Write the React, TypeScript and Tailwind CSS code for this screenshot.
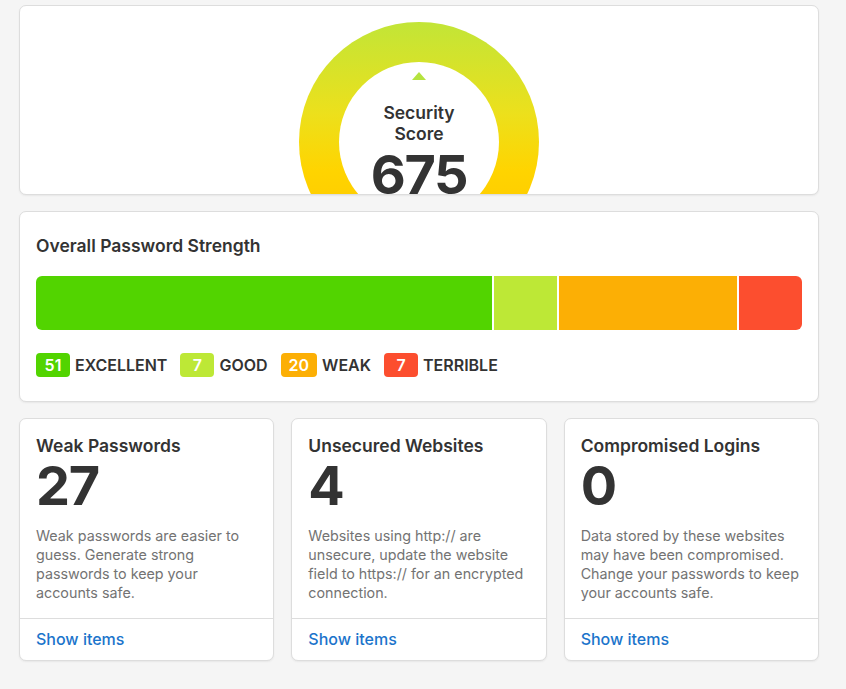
const segments = [
  { count: 51, label: 'EXCELLENT', color: 'bg-[#52d400]' },
  { count: 7, label: 'GOOD', color: 'bg-[#bde836]' },
  { count: 20, label: 'WEAK', color: 'bg-[#fcaf05]' },
  { count: 7, label: 'TERRIBLE', color: 'bg-[#fc4e2f]' },
];

const stats = [
  {
    title: 'Weak Passwords',
    value: 27,
    text: 'Weak passwords are easier to guess. Generate strong passwords to keep your accounts safe.',
  },
  {
    title: 'Unsecured Websites',
    value: 4,
    text: 'Websites using http:// are unsecure, update the website field to https:// for an encrypted connection.',
  },
  {
    title: 'Compromised Logins',
    value: 0,
    text: 'Data stored by these websites may have been compromised. Change your passwords to keep your accounts safe.',
  },
];

const card = 'bg-white border border-[#dddddd] rounded-[7px] shadow-[0_1px_2px_rgba(0,0,0,0.06)]';

export default function App() {
  return (
    <div
      className="min-h-screen bg-[#f5f5f5] text-[#333333]"
      style={{ fontFamily: 'Inter, "Noto Sans", sans-serif' }}
    >
      <div className="ml-[19px] pt-[5px] w-[800px] flex flex-col gap-4 pb-8">
        {/* Score gauge */}
        <section className={`${card} h-[190px] overflow-hidden flex justify-center pt-4`}>
          <div className="relative w-[240px] h-[240px] shrink-0 rounded-full bg-[linear-gradient(180deg,#c2e537_0%,#ece01c_38%,#ffd400_62%,#ffc200_100%)]">
            <div className="absolute inset-[40px] rounded-full bg-white flex flex-col items-center pt-[10px]">
              <div className="w-0 h-0 border-x-[7px] border-x-transparent border-b-[8px] border-b-[#b5e33f]" />
              <p className="mt-[22px] text-[17.5px] leading-[21px] font-semibold text-center">
                Security
                <br />
                Score
              </p>
              <p className="mt-[4px] text-[54px] leading-none font-bold text-[#333333] tracking-tight">675</p>
            </div>
          </div>
        </section>

        {/* Password strength */}
        <section className={`${card} px-4 pt-[22px] pb-[24px]`}>
          <h2 className="text-[17.5px] leading-6 font-semibold">Overall Password Strength</h2>
          <div className="mt-[18px] flex gap-[2px] h-[54px] rounded-[6px] overflow-hidden">
            {segments.map((s) => (
              <div key={s.label} className={s.color} style={{ flexGrow: s.count, flexBasis: 0 }} />
            ))}
          </div>
          <div className="mt-[23px] flex items-center gap-[13px]">
            {segments.map((s) => (
              <div key={s.label} className="flex items-center gap-[5px]">
                <span
                  className={`${s.color} text-white font-semibold text-[16px] leading-6 h-6 min-w-[34px] px-2 rounded-[4px] text-center`}
                >
                  {s.count}
                </span>
                <span className="text-[16px] font-semibold">{s.label}</span>
              </div>
            ))}
          </div>
        </section>

        {/* Stat cards */}
        <div className="grid grid-cols-3 gap-[17px]">
          {stats.map((s) => (
            <section key={s.title} className={`${card} flex flex-col h-[243px]`}>
              <div className="px-4 pt-[15px] flex-1">
                <h3 className="text-[17.5px] leading-6 font-semibold">{s.title}</h3>
                <p className="text-[54px] leading-[55px] font-bold tracking-tight">{s.value}</p>
                <p className="mt-[13px] text-[14.3px] leading-[19px] text-[#737373]">{s.text}</p>
              </div>
              <div className="border-t border-[#dddddd] px-4 pb-[2px] h-[42px] flex items-center">
                <a href="#" className="text-[16px] font-medium text-[#1b74cb]">
                  Show items
                </a>
              </div>
            </section>
          ))}
        </div>
      </div>
    </div>
  );
}
